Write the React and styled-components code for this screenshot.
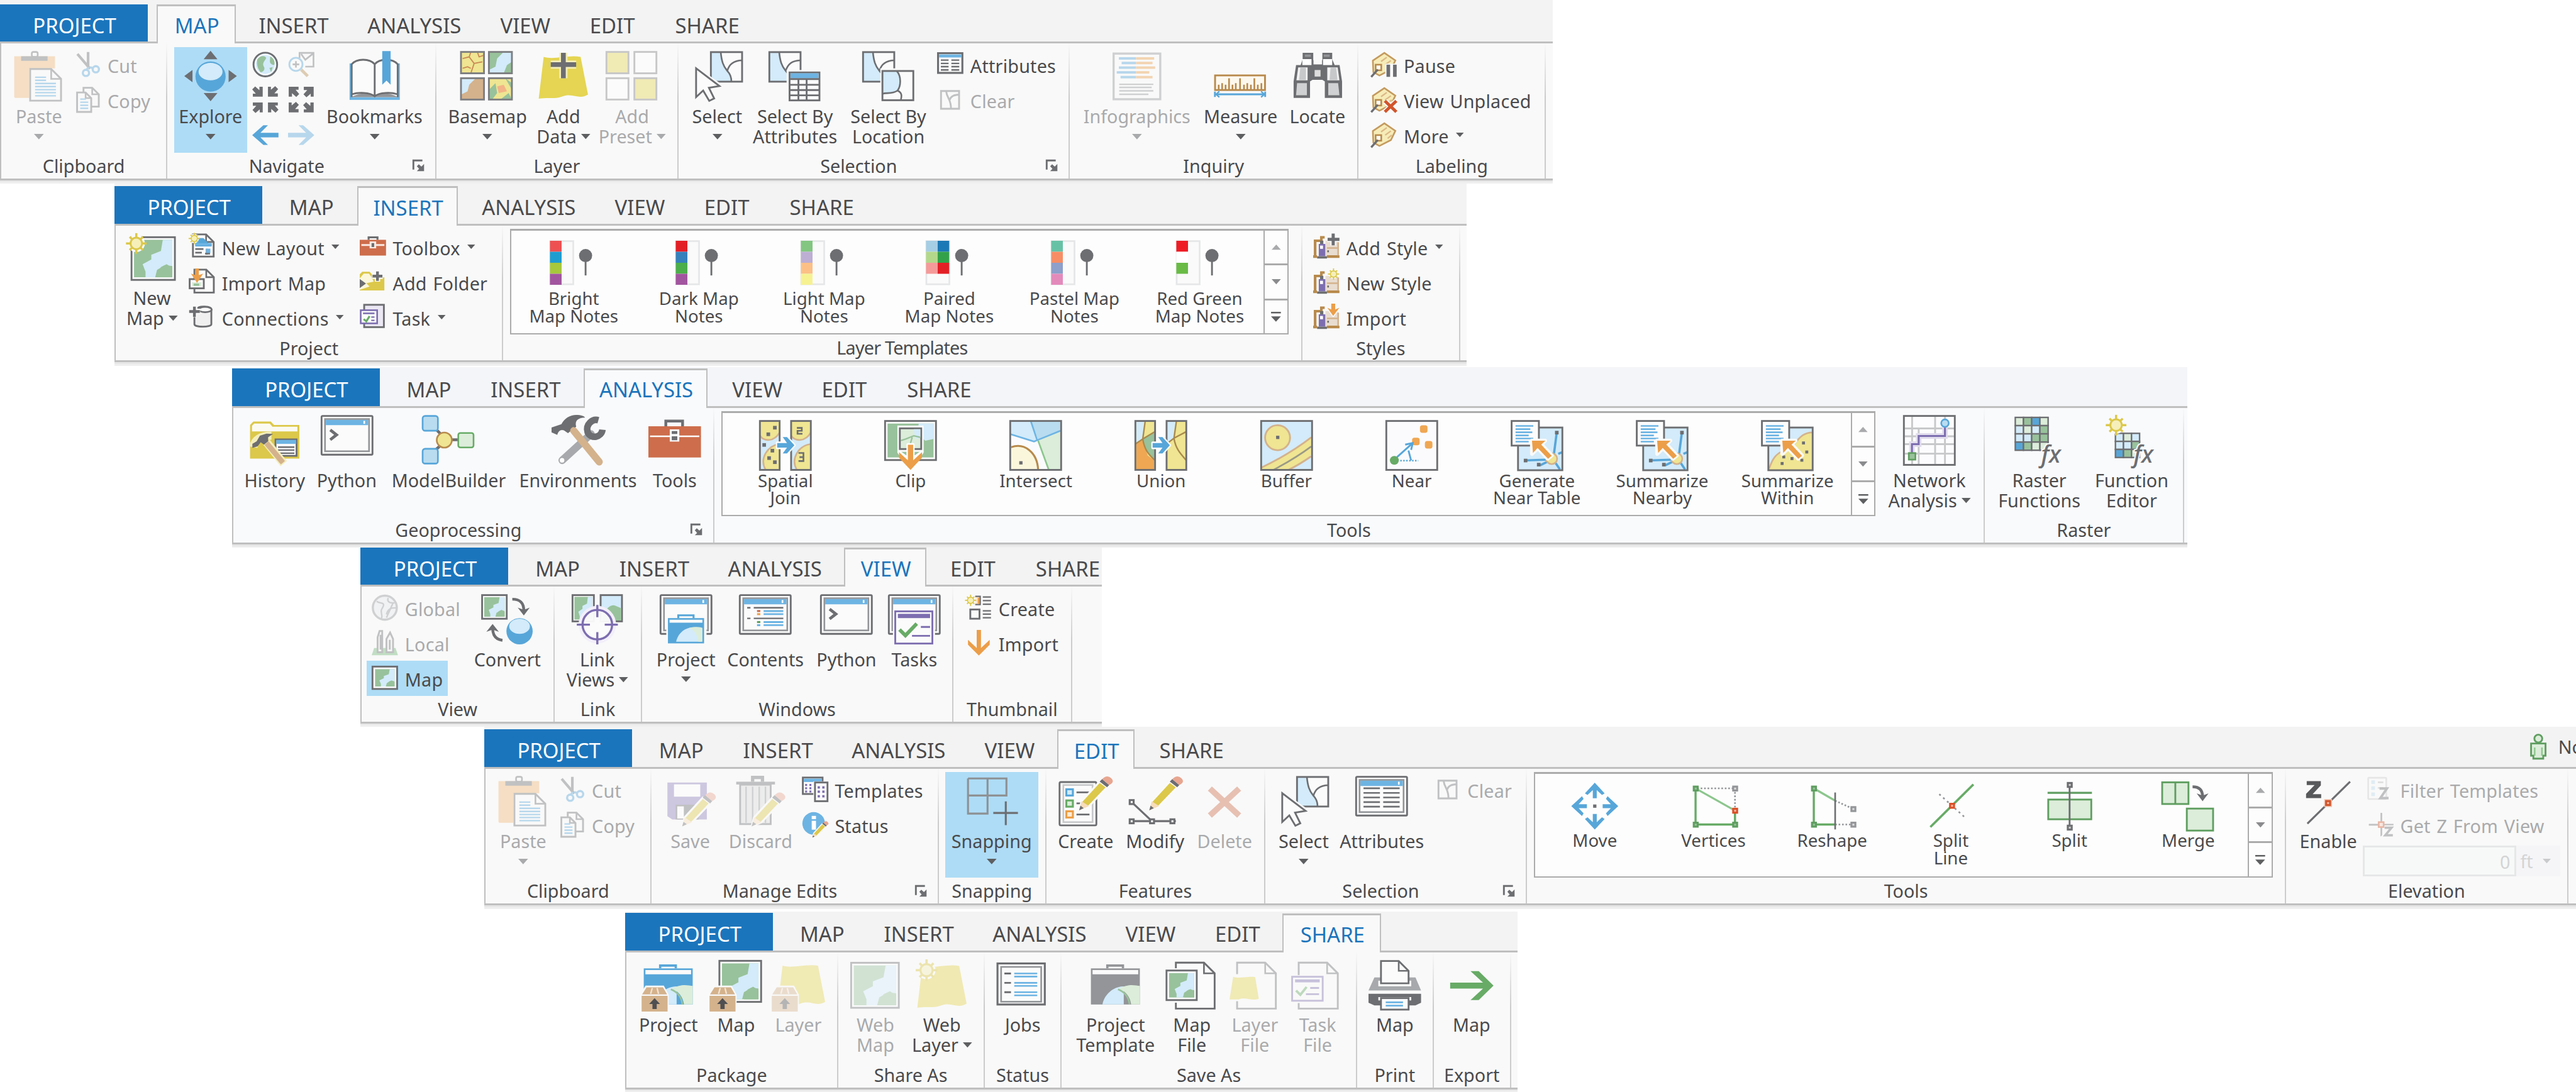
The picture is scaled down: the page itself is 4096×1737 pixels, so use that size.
import React from 'react';
import styled, { createGlobalStyle, css } from 'styled-components';

const u = (n) => `${Math.round(n * 2.6122 * 100) / 100}px`;

const C = {
  ink: '#4a4a4c', dark: '#6d6e71', mid: '#939598', light: '#c7c8ca',
  blue: '#57a6d9', sky: '#6db4e3', pale: '#d3ebfa', green: '#98c29b', leaf: '#5f9e60',
  mint: '#dcedda', yellow: '#dcc84a', sun: '#e5d552', cream: '#efe592', tan: '#d4b28c', brown: '#b88a4c',
  orange: '#ec9e48', rust: '#cd6d4b', purple: '#7d6eb0', line: '#bfbfbf', brand: '#1b75bc',
};

const Global = createGlobalStyle`
  html, body { margin: 0; padding: 0; background: #fff; overflow: hidden; }
  * { box-sizing: border-box; }
`;

const Page = styled.main`
  display: flex;
  flex-direction: column;
  align-items: flex-start;
  width: 4096px;
  height: 1737px;
  overflow: hidden;
  background: #fff;
  font-family: 'Noto Sans', 'Open Sans', sans-serif;
  font-size: ${u(11)};
  color: ${C.ink};
`;

/* ---------- ribbon frame ---------- */
const RibbonBox = styled.section`
  flex: none;
  width: ${(p) => u(p.$w)};
  margin-left: ${(p) => u(p.$x)};
  margin-top: ${(p) => u(p.$gap)};
  overflow: hidden;
`;
const TabStrip = styled.nav`
  display: flex;
  align-items: flex-end;
  height: ${(p) => u(23.7 + p.$lead)};
  border-bottom: 3px solid ${C.line};
  background: ${(p) => (p.$cool ? '#f4f5f8' : '#f3f3f3')};
`;
const Tab = styled.div`
  flex: none;
  display: flex;
  align-items: center;
  justify-content: center;
  width: ${(p) => u(p.$w)};
  height: ${u(22.9)};
  margin-left: ${(p) => u(p.$ml || 0)};
  padding-top: ${u(2.8)};
  padding-left: ${u(0.9)};
  font-size: ${u(12.6)};
  white-space: nowrap;
  color: ${C.ink};
  ${(p) => p.$brand && css`background: ${C.brand}; color: #fff;`}
  ${(p) => p.$active && css`
    height: ${u(23.9)};
    margin-bottom: -3px;
    padding-top: ${u(0.8)};
    border: 2px solid ${C.line};
    border-top-width: 3px;
    border-bottom: 0;
    background: ${p.$cool ? '#f9fafc' : '#f9f9f9'};
    color: ${C.brand};
  `}
`;
const Account = styled.div`
  display: flex;
  align-items: center;
  align-self: flex-start;
  gap: ${u(7.3)};
  margin-left: auto;
  width: ${u(28.1)};
  height: ${u(24)};
  overflow: hidden;
  white-space: nowrap;
`;
const Body = styled.div`
  display: flex;
  height: ${u(83.3)};
  border-left: 2px solid ${C.line};
  border-bottom: 3px solid ${C.line};
  background: ${(p) => (p.$cool ? '#f9fafc' : '#f9f9f9')};
`;
const Shadow = styled.div`
  height: ${u(2)};
  background: linear-gradient(#e6e6e6 50%, #efefef 50%);
`;
const GroupBox = styled.div`
  flex: none;
  display: flex;
  flex-direction: column;
  width: ${(p) => u(p.$w)};
  padding-top: ${u(2)};
  border-right: 2px solid transparent;
  border-image: linear-gradient(rgba(204, 204, 204, 0), #cccccc 40%) 1;
`;
const GroupContent = styled.div`
  display: flex;
  height: ${u(64.4)};
  padding-left: ${(p) => u(p.$pad)};
`;
const GroupFoot = styled.div`
  display: flex;
  align-items: center;
  height: ${u(16)};
`;
const GroupLabel = styled.div`
  flex: 1;
  padding-top: ${u(0.8)};
  text-align: center;
  white-space: nowrap;
  line-height: ${u(14)};
  letter-spacing: ${(p) => u(p.$track || 0)};
`;
const LauncherSlot = styled.div`
  flex: none;
  width: ${u(13.7)};
  margin-left: ${u(4.3)};
  display: flex;
`;

/* ---------- controls ---------- */
const BigBox = styled.div`
  flex: none;
  display: flex;
  flex-direction: column;
  align-items: center;
  width: ${(p) => u(p.$w)};
  height: ${u(64.4)};
  margin-left: ${(p) => u(p.$ml || 0)};
  padding-top: ${u(2.1)};
  background: ${(p) => (p.$on ? '#aedcf6' : 'transparent')};
  color: ${(p) => (p.$off ? '#a9aaac' : C.ink)};
`;
const BigText = styled.div`
  margin-top: ${u(1.9)};
  line-height: ${u(12.3)};
  text-align: center;
  white-space: nowrap;
`;
const TextLine = styled.div`
  display: flex;
  align-items: center;
  justify-content: center;
  height: ${u(12.3)};
`;
const Svg = styled.svg`
  flex: none;
  display: block;
  overflow: visible;
  width: ${(p) => u(p.$s)};
  height: ${(p) => u(p.$h || p.$s)};
  margin-left: ${(p) => u(p.$ml || 0)};
  opacity: ${(p) => (p.$off ? 0.4 : 1)};
`;
const Rows = styled.div`
  flex: none;
  display: flex;
  flex-direction: column;
  align-items: flex-start;
  width: ${(p) => (p.$w ? u(p.$w) : 'auto')};
  margin-left: ${(p) => u(p.$ml || 0)};
`;
const RowBox = styled.div`
  display: flex;
  align-items: center;
  height: ${u(21.45)};
  padding: 0 ${(p) => u(p.$px || 0)};
  background: ${(p) => (p.$on ? '#aedcf6' : 'transparent')};
  color: ${(p) => (p.$off ? '#a9aaac' : C.ink)};
  white-space: nowrap;
`;
const RowText = styled.span`
  margin-left: ${(p) => u(p.$gap)};
  padding-top: ${u(1.5)};
  letter-spacing: ${u(0.08)};
  word-spacing: ${u(0.8)};
`;
const NavGrid = styled.div`
  display: grid;
  grid-template-columns: ${u(16)} ${u(16)};
  grid-auto-rows: ${u(21.45)};
  column-gap: ${u(5.8)};
  align-items: center;
  margin-left: ${u(3)};
`;
const GalleryBox = styled.div`
  flex: none;
  display: flex;
  width: ${(p) => u(p.$w)};
  height: ${u(64.2)};
  border: 2px solid #ababab;
  border-top-width: 3px;
  background: #fdfdfd;
`;
const GalleryItem = styled.div`
  flex: none;
  display: flex;
  flex-direction: column;
  align-items: center;
  width: ${(p) => u(p.$w)};
  padding-top: ${u(3.9)};
  text-align: center;
  white-space: nowrap;
  font-size: ${u(10.6)};
  line-height: ${u(10.5)};
`;
const GalleryText = styled.div`
  margin-top: ${(p) => u(p.$up ? -0.6 : 0.1)};
`;
const Scroller = styled.div`
  display: flex;
  flex-direction: column;
  width: ${u(14.4)};
  margin-left: auto;
  border-left: 2px solid #ababab;
`;
const ScrollCell = styled.div`
  flex: 1;
  display: flex;
  align-items: center;
  justify-content: center;
  & + & { border-top: 3px solid ${(p) => (p.$strong ? '#ababab' : '#cccccc')}; }
`;
const ZField = styled.div`
  display: flex;
  align-items: center;
  margin-left: ${u(-2.7)};
  height: ${u(21.45)};
  padding-top: ${u(1)};
  color: #d3d4d5;
`;
const ZInput = styled.div`
  width: ${u(93.4)};
  height: ${u(18.8)};
  padding-right: ${u(2.4)};
  border: 3px solid #e6e7e8;
  background: #f7f9f8;
  text-align: right;
  line-height: ${u(17.4)};
`;
const ZUnit = styled.div`
  display: flex;
  align-items: center;
  gap: ${u(6)};
  width: ${u(27)};
  height: ${u(18.8)};
  padding-left: ${u(2.6)};
  background: #f5f5f8;
`;

/* ---------- drawing helpers ---------- */
const P = ({ d, c = C.dark, w = 1, f = 'none', ...r }) => <path d={d} stroke={c} strokeWidth={w} fill={f} {...r} />;
const F = ({ d, f = C.dark }) => <path d={d} fill={f} />;
const R = ({ x, y, w, h, f = 'none', s = 'none', sw = 1, rx = 0 }) => (
  <rect x={x} y={y} width={w} height={h} fill={f} stroke={s} strokeWidth={sw} rx={rx} />
);
const Halo = ({ d, w = 3, c = '#fafafa' }) => <path d={d} stroke={c} strokeWidth={w} fill={c} strokeLinejoin="round" />;

const MapArt = ({ x, y, w, h }) => (
  <svg x={x} y={y} width={w} height={h} viewBox="0 0 20 20" preserveAspectRatio="none">
    <rect width="20" height="20" fill={C.green} />
    <path d="M15 0H20V14L16 13.5L12 16L11 20H6V17L4.5 13L9 10.5V8L14 6Z" fill={C.pale} />
    <path d="M14 14.5L17 13L20 15V20H12Z" fill={C.green} />
  </svg>
);
const FramedMap = ({ x, y, w, h, c = C.dark }) => (
  <g>
    <R x={x + 0.5} y={y + 0.5} w={w - 1} h={h - 1} f="#fcfcfc" s={c} sw={1.1} />
    <MapArt x={x + 2} y={y + 2} w={w - 4} h={h - 4} />
  </g>
);
const Sun = ({ x, y, k = 1 }) => (
  <g transform={`translate(${x} ${y}) scale(${k})`}>
    <circle r="5.5" fill="#fafafa" />
    {[0, 45, 90, 135, 180, 225, 270, 315].map((a) => (
      <rect key={a} x="-0.7" y={a % 90 ? -6 : -6.6} width="1.4" height="3" fill={C.yellow} transform={`rotate(${a})`} />
    ))}
    <circle r="3.7" fill="#f6efb9" stroke={C.yellow} strokeWidth="1.2" />
  </g>
);
const Win = ({ children }) => (
  <g>
    <R x={0.5} y={1} w={31} h={23.6} f="#fbfbfb" s={C.dark} sw={1.1} rx={0.6} />
    <R x={2.6} y={2.9} w={26.8} h={19.6} f="#fbfbfb" s={C.mid} />
    <R x={3.1} y={3.4} w={25.8} h={3.2} f={C.sky} />
    <R x={26} y={4} w={1} h={1.8} f="#fff" />
    {children}
  </g>
);
const Doc = ({ x, y, w, h, fold = 6, c = C.dark, f = '#fbfbfb' }) => (
  <g>
    <path d={`M${x} ${y}H${x + w - fold}L${x + w} ${y + fold}V${y + h}H${x}Z`} fill={f} stroke={c} strokeWidth="1.1" />
    <path d={`M${x + w - fold} ${y}V${y + fold}H${x + w}`} fill="none" stroke={c} strokeWidth="1" />
  </g>
);
const Zones = ({ x, y }) => (
  <g transform={`translate(${x} ${y})`}>
    <rect x="0.5" y="0.5" width="19" height="18" fill="#fbfbfb" />
    <path d="M0.5 0.5H6.5C7 6 8.5 9 11.5 12C12.5 14 13 16 13 18.5H0.5Z" fill={C.pale} />
    <rect x="0.5" y="0.5" width="19" height="18" fill="none" stroke={C.dark} strokeWidth="1.1" />
    <path d="M6.5 0.5C7 6 8 9 10.5 12C12.5 14 13 16 13 18.5M10.5 12C11.5 8 14 5.6 19.5 5.5" fill="none" stroke={C.dark} />
  </g>
);
const Pencil = ({ x, y, k = 1 }) => (
  <g transform={`translate(${x} ${y}) scale(${k})`}>
    <path d="M0 20L1.5 14.5L12.5 2.5L17 6L6 17.5Z" fill={C.yellow} stroke="#fafafa" strokeWidth="1.2" />
    <path d="M0 20L1.5 14.5L6 17.5Z" fill="#f7dcb8" />
    <path d="M0 20L0.8 17.2L2.8 18.7Z" fill={C.dark} />
    <path d="M12.5 2.5L14 1L18.3 4.6L17 6Z" fill={C.dark} />
    <path d="M14 1Q17 -2 19.5 0.4T18.3 4.6Z" fill="#e8a690" />
  </g>
);
const Box = ({ x, y }) => (
  <g transform={`translate(${x} ${y})`}>
    <path d="M-1 16V4.5L2.4 -1H13.5L16.5 4.5V16Z" fill="#fafafa" />
    <path d="M0.3 4.3L3 0H13L15.5 4.3Z" fill={C.tan} />
    <rect x="0" y="5.2" width="15.8" height="9.6" fill={C.tan} />
    <path d="M5.5 4L6.5 0.4M10.3 4L9.4 0.4" stroke="#f3e4d2" strokeWidth="0.9" />
    <path d="M7.9 6.6L11.2 10.2H9.2V13.2H6.6V10.2H4.6Z" fill="#4f4f52" />
  </g>
);
const Dots = ({ pts, s = 1.8, f = C.dark }) => pts.map(([x, y]) => <rect key={`${x},${y}`} x={x} y={y} width={s} height={s} fill={f} />);
const Case = ({ c = C.blue }) => (
  <g>
    <R x={1} y={5.5} w={29.8} h={22} f={c} />
    <R x={2} y={6.5} w={27.8} h={2.6} f="#fafafa" />
    <P d="M11 5.5V3.8H20.5V5.5" c={c} w={1.4} />
    <F d="M8 27.5C9 22 14 16.5 21 16.5V27.5Z" f={C.pale} />
    <F d="M18 18C24 14.5 28 16 30.8 16.2V27.5H25.5C25 23 22 19 18 18Z" f={C.mint} />
    <P d="M17.5 18.3C22 20 24 23 24.5 27.5" c={C.green} w={1} />
  </g>
);
const CurveArrow = ({ d, head }) => (
  <g><P d={d} w={1.7} /><F d={head} /></g>
);
const YellowLayer = () => <F d="M4 4C10 6 19 2.6 26.5 4L31 27C25 30.5 22 25.5 15 28.2C11 29.8 6 28.5 1 29.5Z" f={C.sun} />;
const Tag = () => (
  <g>
    <P d="M1.5 5.5L8.5 0.8L15.2 5.4L12.5 11L5.5 14.6L1.8 12.5Z" c="#c49a5e" w={1} f="#f6ecb8" />
    <P d="M6.5 6L10 3.5M9 8L12.5 5.5M10.5 10L13 8" c="#dcb987" w={0.9} />
    <R x={3.2} y={8} w={3.4} h={3.4} f="#fff" s={C.brown} />
    <P d="M0.5 15.5L4.5 11" w={1.3} />
  </g>
);
const Lab = () => (
  <g>
    <P d="M1.2 13.5V4.6H5V2.5H7" c={C.brown} w={1.6} />
    <R x={7.5} y={4.5} w={7.5} h={9.5} f="#e9ddd0" />
    <R x={3.4} y={6.5} w={4} h={7.5} f={C.purple} />
    <R x={4.2} y={7.5} w={1.8} h={2} f="#fff" />
    <R x={4.2} y={4.5} w={2} h={2} f={C.dark} />
    <R x={2.4} y={14} w={6} h={1.4} f={C.dark} />
    <R x={8.6} y={10.4} w={1} h={1.2} f={C.dark} />
    <P d="M0 14.2H2.4M8.4 14.2H16" c={C.brown} w={1.6} />
    <P d="M15.2 13.5V5.5M8.4 9H15" c={C.tan} w={1} />
  </g>
);
const Palette = ({ a, b }) => (
  <g>
    <R x={1.9} y={2.5} w={14} h={26.3} f="#fafafa" s="#e5e6e7" />
    {a.map((c, i) => (c ? <R key={i} x={1.7} y={2.3 + i * 6.7} w={7.1} h={6.7} f={c} /> : null))}
    {(b || []).map((c, i) => (c ? <R key={i} x={8.8} y={2.3 + i * 6.7} w={7} h={6.7} f={c} /> : null))}
    <circle cx="23.4" cy="11.3" r="4" fill={C.dark} />
    <P d="M23.4 14V23.4" w={1.1} />
  </g>
);
const Report = ({ zone }) => (
  <g>
    <R x={4.5} y={5} w={27} h={26} f={C.pale} />
    {zone ? (
      <g>
        <F d="M4.5 31C7 24 9 21 14 19C22 17 22 8 31.5 8V31Z" f={C.cream} />
        <P d="M5 30C7 24 9 21 14 19C22 17 22 8 31.5 8" c={C.tan} />
        <Dots pts={[[25, 13.5], [27, 19], [13, 22], [18, 23], [24, 24], [12, 26], [21, 19]]} />
      </g>
    ) : (
      <g>
        <P d="M28 8.5L26 24M10 25L24 24.5M18 28L24 25M27 26L30 30.5M29 21L31.5 20" c={C.blue} w={1.4} />
        <Dots pts={[[27, 7], [8, 24], [16, 26.5]]} s={2.2} />
        <circle cx="25" cy="24" r="3.3" fill={C.cream} stroke={C.tan} />
      </g>
    )}
    <R x={4.5} y={5} w={27} h={26} s={C.dark} sw={1.1} />
    <R x={0.6} y={1} w={16.6} h={15} f="#fcfcfc" s={C.dark} sw={1.1} />
    <P d="M3 4H13.8M3 6H12M3 7.9H13.2M3 9.8H11M3 11.7H13.8M3 13.6H11" c={C.sky} w={1} />
    <Halo d="M13 13H21L18.8 15.4L25 22L22.6 24L16.6 17.6L13 21Z" w={2.4} />
    <F d="M13 13H21.2L18.6 15.4L25 22.2L22.8 24L16.4 17.4L13.6 20.5Z" f={C.orange} />
  </g>
);
const Fx = ({ x, y }) => (
  <text x={x} y={y} fontFamily="'Noto Sans', sans-serif" fontStyle="italic" fontWeight="500" fontSize="14.5" fill={C.dark}
    stroke="#f9fafc" strokeWidth="1.6" paintOrder="stroke">fx</text>
);
const Cells = ({ x, y, s, rows }) => rows.map((r, j) => r.split('').map((k, i) => (
  <rect key={`${i}${j}`} x={x + i * s} y={y + j * s} width={s} height={s} stroke={C.dark} strokeWidth="0.9"
    fill={{ m: C.mint, g: C.green, b: C.blue, p: C.pale }[k]} />
)));
const Node = ({ x, y, c = C.leaf, f = '#98c29b' }) => <rect x={x - 1.1} y={y - 1.1} width="2.4" height="2.4" fill={f} stroke={c} strokeWidth="1.2" />;
const Arrow4 = 'M16 1.5L22 8L20.4 9L17.2 6V11H14.8V6L11.6 9L10 8Z';
const Corner = ({ x, y, a }) => (
  <path transform={`translate(${x} ${y}) rotate(${a})`} d="M-3 -3H3V-1.2L1.2 -1.2L3.4 1.4L1.6 3.2L-1 0.9V3H-3Z" fill={C.dark} />
);

/* ---------- icon set ---------- */
const ICONS = {
  paste: (
    <g>
      <F d="M1 3.6H25.8V11H10V29H2Q1 29 1 28Z" f="#f0b776" />
      <F d="M5.2 3.6H21.3V6.4H5.2Z" f={C.dark} />
      <R x={11.7} y={1} w={3.6} h={3} s={C.dark} rx={1} />
      <Doc x={10.7} y={11.4} w={18.8} h={19.3} />
      <P d="M13.7 16.4H20.4M13.7 18.3H20.4M13.7 20.2H26.4M13.7 22.1H26.4M13.7 24H26.4M13.7 25.8H26.4M13.7 27.7H26.4" c={C.blue} w={0.9} />
    </g>
  ),
  cut: (
    <g>
      <P d="M0.8 1.5L8.5 10.5M7.3 0.3V9.5" w={1.6} />
      <circle cx="6" cy="13" r="1.9" fill="none" stroke={C.blue} strokeWidth="1.3" />
      <circle cx="12" cy="10.8" r="1.9" fill="none" stroke={C.blue} strokeWidth="1.3" />
      <P d="M7.5 9.5L6.5 11M8.5 9.5L10.4 10.2" c={C.blue} w={1.3} />
    </g>
  ),
  copy: (
    <g>
      <Doc x={4.5} y={0.6} w={9.3} h={11.5} fold={4} />
      <Doc x={0.6} y={3.5} w={8.6} h={11.8} fold={3.4} />
      <P d="M2.5 7.5H6M2.5 9.4H7.4M2.5 11.3H7.4M2.5 13.1H7.4" c={C.blue} w={0.9} />
    </g>
  ),
  explore: (
    <g>
      <F d="M16 0.3L20.2 5.5H11.8ZM16 31L20.2 26H11.8ZM0 15.7L5 12V19.4ZM32 15.7L27 12V19.4Z" />
      <circle cx="16" cy="16" r="9.2" fill={C.blue} />
      <ellipse cx="16" cy="13" rx="7.3" ry="5.3" fill={C.pale} />
    </g>
  ),
  globe: (
    <g>
      <circle cx="8" cy="7.9" r="7.2" fill={C.pale} stroke={C.dark} strokeWidth="1.1" />
      <circle cx="8" cy="7.9" r="6.1" fill={C.pale} stroke="#fff" strokeWidth="0.7" />
      <F d="M3 5C5 2 8 2.5 8.5 4C7.5 6 6 7 7 9C8.5 11 6 13 5 12.5C4 11 2.5 9 3 5ZM11 3C13 4 14 6 13.5 8C12 8.5 10.5 7 10.8 5.5ZM10.5 10L12.5 9.5L11.5 12.5Z" f={C.green} />
    </g>
  ),
  zoomSel: (
    <g>
      <P d="M7 4V0.8H15.5V9.2H10.5M8 1.5L10.5 5L15.3 1.2" />
      <circle cx="4.8" cy="7.8" r="4" fill="#fafafa" stroke={C.blue} strokeWidth="1.1" />
      <P d="M2.8 7.8H6.8M4.8 5.8V9.8" />
      <P d="M8 11L12 15" c={C.brown} w={1.8} />
    </g>
  ),
  shrink: <g><Corner x={3.4} y={3} a={180} /><Corner x={12.6} y={3} a={270} /><Corner x={3.4} y={12.6} a={90} /><Corner x={12.6} y={12.6} a={0} /></g>,
  grow: <g><Corner x={3.4} y={3} a={0} /><Corner x={12.6} y={3} a={90} /><Corner x={3.4} y={12.6} a={270} /><Corner x={12.6} y={12.6} a={180} /></g>,
  back: <F d="M0 8L6.8 2H9.6L5 6.6H16V9.4H5L9.6 14H6.8Z" f={C.blue} />,
  fwd: <F d="M16 8L9.2 2H6.4L11 6.6H0V9.4H11L6.4 14H9.2Z" f={C.blue} />,
  book: (
    <g>
      <R x={0.7} y={8} w={30.6} h={22.2} f={C.sky} />
      <F d="M2 28.5V8.5C5 4.8 13 4.8 16 8.5C19 4.8 27 4.8 30 8.5V28.5Z" f="#fbfbfb" />
      <F d="M2 28.5C6 26 13 25.5 16 28C19 25.5 26 26 30 28.5Z" f={C.mid} />
      <P d="M2 28.5V8.5C5 4.8 13 4.8 16 8.5C19 4.8 27 4.8 30 8.5V28.5M16 8.5V28M2 26.8C6 25.5 13 25.5 16 28C19 25.5 26 25.5 30 26.8" w={1.1} />
      <F d="M20.6 0.5H25.7V21L23.2 18.5L20.6 21Z" f={C.blue} />
    </g>
  ),
  basemap: (
    <g>
      <R x={0} y={1} w={14} h={13} f={C.cream} /><P d="M1 5L5 4L6 1M5 4L8 8L13 7M8 8L6 14M10 1L11 4L14 3M1 11L4 10L6 11" c="#c98a55" w={0.7} />
      <R x={17} y={1} w={14} h={13} f={C.pale} /><F d="M17 1H26L22 5L21 10L17 12ZM31 7L28 9L26 14H31Z" f={C.green} />
      <R x={0} y={17} w={14} h={13} f={C.tan} /><F d="M0 17H9L5 21L4 25L0 27Z" f={C.pale} />
      <R x={17} y={17} w={14} h={13} f={C.cream} /><F d="M17 24L21 20L22 26L19 30H17ZM27 17L31 20V24ZM24 30L29 26L31 30Z" f={C.green} /><F d="M22 22L26 21L28 25L23 26Z" f="#f3b487" />
      {[[0, 1], [17, 1], [0, 17], [17, 17]].map(([x, y]) => <R key={`${x}-${y}`} x={x} y={y} w={14} h={13} s="#7d7e81" sw={1.1} />)}
    </g>
  ),
  addData: (
    <g>
      <YellowLayer />
      <P d="M16 1.5V17M8.3 8.7H23.8" c="#f3eebb" w={5} />
      <P d="M16 1.5V17M8.3 8.7H23.8" w={2.9} />
    </g>
  ),
  preset: (
    <g>
      {[[0, 1, 1], [17, 1, 0], [0, 17, 0], [17, 17, 1]].map(([x, y, on]) => (
        <R key={`${x}-${y}`} x={x + 0.5} y={y} w={13.4} h={13} f={on ? '#e5d552' : '#fff'} s="#7d7e81" sw={1.1} />
      ))}
    </g>
  ),
  select: (
    <g>
      <Zones x={11.5} y={0.6} />
      <Halo d="M3 11V28.5L7.3 24.5L11 30.8L14 29.3L10.8 22.8L17.5 21.5Z" w={2.4} c="#f9f9f9" />
      <P d="M3 11V28.5L7.3 24.5L11 30.8L14 29.3L10.8 22.8L17.2 21.8Z" f="#fbfbfb" w={1.1} />
    </g>
  ),
  selectAttr: (
    <g>
      <Zones x={0} y={0.6} />
      <R x={11} y={12} w={22} h={20} f="#f9f9f9" />
      <R x={12.8} y={13.5} w={18.2} h={17} f="#fbfbfb" s={C.dark} sw={1.1} />
      <R x={13.4} y={14} w={17} h={3} f={C.sky} />
      <P d="M12.8 17.5H31M12.8 21H31M12.8 24.2H31M12.8 27.4H31M18.2 17.5V30.5M23.2 17.5V30.5" w={1.1} />
    </g>
  ),
  selectLoc: (
    <g>
      <Zones x={0} y={0.6} />
      <R x={11} y={11} w={22} h={21} f="#f9f9f9" />
      <R x={12.3} y={12.6} w={18.8} h={17.8} f="#fbfbfb" />
      <F d="M12.3 12.6H21C24 16 23.5 22 21.5 24.5C18 27 15 26 12.3 26.5Z" f={C.pale} />
      <P d="M21 12.6C24 16 23.5 22 21.5 24.5C18 27 15 25.5 12.3 26.5M21.5 24.5C24.5 26 24 28 23.5 30.4" />
      <R x={12.3} y={12.6} w={18.8} h={17.8} s={C.dark} sw={1.1} />
    </g>
  ),
  tableSm: (
    <g>
      <R x={0.6} y={1} w={14.8} h={12} f="#fbfbfb" s={C.dark} sw={1.2} />
      <R x={1.2} y={1.8} w={13.6} h={1.8} f={C.sky} />
      <P d="M2.3 5.2H7M8.7 5.2H13.5M2.3 7.2H7M8.7 7.2H13.5M2.3 9.2H7M8.7 9.2H13.5M2.3 11.2H7M8.7 11.2H13.5" w={0.9} />
    </g>
  ),
  clear: <P d="M2.4 2.6H13.4V13.4H2.4ZM5.5 2.6C6 7 8.5 7.5 8.5 13.4M7.5 8.2C8.5 5.5 10.5 5 13.4 4.8" w={1.1} />,
  info: (
    <g>
      <R x={1.8} y={2} w={28.4} h={27.8} f="#fbfbfb" s={C.mid} sw={1.3} />
      {[[5, 11, 4.9], [6.7, 10, 7.7], [5, 11.6, 10.5], [3.7, 8, 13.4], [6, 10, 16.3]].map(([a, r, y]) => (
        <g key={y}><R x={a} y={y - 0.7} w={15.5 - a} h={1.5} f={C.blue} /><R x={15.5} y={y - 0.7} w={r} h={1.5} f={C.orange} /></g>
      ))}
      <P d="M5.2 20.7H26M5.2 22.6H25M5.2 24.7H26M5.2 26.8H23" c={C.mid} w={0.9} />
    </g>
  ),
  measure: (
    <g>
      <R x={0.4} y={15.3} w={30.4} h={8.9} f="#fdf8ee" s={C.brown} sw={1.1} />
      <P d="M2.6 24V21M4.7 24V20M6.8 24V21M8.9 24V17M11 24V21M13 24V20M15.6 24V17M18 24V21M20 24V20M22.2 24V21M24.3 24V17M26.4 24V21M28.6 24V20" c={C.brown} w={1} />
      <P d="M0.3 25.2V28.4M30.9 25.2V28.4M1 26.8H30.5" c={C.blue} w={1.1} />
      <P d="M3 25L1 26.8L3 28.6M28.4 25L30.4 26.8L28.4 28.6" c={C.blue} w={0.9} />
    </g>
  ),
  locate: (
    <g>
      <F d="M7 1.5H13.5V6H19V1.5H25V5.5L26.5 9H29.5L31 19V29H20.5V19L19 18H13L11.5 19V29H1.5V19L3 9H5.8L7 5.5Z" />
      <F d="M13.6 1.5H18.8V8.6H13.6Z" f="#f9f9f9" />
      <F d="M8.3 2.6H12V4H8.3ZM19.8 2.6H23.5V4H19.8Z" f={C.mid} />
      <F d="M6.8 5.4H12.4V9H6.8ZM19.4 5.4H25V9H19.4Z" f="#fff" />
      <F d="M4.3 10.4H10V18.3H3.2ZM22 10.4H28.3L29.4 18.3H22Z" f="#f2f2f2" />
      <F d="M5.6 10.4H9V18.3H4.8Z" f={C.light} /><F d="M24 10.4H27.4L28.2 18.3H23.4Z" f={C.light} />
      <F d="M3.6 20H9.6V27.4H3ZM22.6 20H28.6L29.4 27.4H22.6Z" f="#d0d1d2" />
      <R x={14.3} y={12} w={3.6} h={4} f="#ddd" />
    </g>
  ),
  tagPause: <g><Tag /><R x={9} y={7.4} w={7.4} h={8.4} f="#f9f9f9" /><R x={9.8} y={8} w={2.2} h={7.4} f={C.dark} /><R x={13.8} y={8} w={2.2} h={7.4} f={C.dark} /></g>,
  tagX: <g><Tag /><P d="M9 8.8L15.8 15.3M15.8 8.8L9 15.3" c="#fafafa" w={3.4} /><P d="M8.8 8.6L15.8 15.3M15.8 8.6L8.8 15.3" c="#d2552b" w={1.9} /></g>,
  tag: <Tag />,
  launcher: <g><P d="M0.5 6V0.5H6" w={1.1} /><F d="M7 2.6V7H2.6L4 5.6L2.6 4L3.8 2.8L5.4 4.2Z" /></g>,

  newMap: <g><FramedMap x={3} y={2.3} w={27.4} h={27} /><Sun x={6.4} y={6.6} k={0.95} /></g>,
  newLayout: (
    <g>
      <Doc x={2.6} y={0.7} w={12.6} h={13.5} fold={4.6} />
      <F d="M4 3H9L12 6H14V8H4Z" f={C.blue} /><R x={4} y={6} w={10} h={1.6} f={C.sky} />
      <P d="M4 9.6H9M4 11.8H8M11 9.5V13M10 12.4H13" w={1} /><R x={10.6} y={9.4} w={2.6} h={2.6} f={C.sky} />
      <Sun x={3.4} y={3.2} k={0.52} />
    </g>
  ),
  importMap: (
    <g>
      <Doc x={3.5} y={0.7} w={11.8} h={14} fold={4.6} />
      <R x={0.6} y={6.5} w={8.6} h={5.6} f="#fbfbfb" s={C.dark} sw={1.1} /><R x={2} y={8.4} w={5.8} h={2.4} f={C.mint} /><R x={3} y={9.2} w={3.4} h={1.4} f={C.green} />
      <F d="M4 0H6.2V4L8.8 3.2L5.1 8.8L1.4 3.2L4 4Z" f={C.orange} />
    </g>
  ),
  connections: (
    <g>
      <P d="M3.5 8V12.5C3.5 14.5 13.8 14.5 13.8 12.5V3.5C13.8 1.5 6 1.2 5.4 3" f="#f0f0f0" w={1.1} />
      <ellipse cx="10" cy="3.6" rx="4" ry="1.6" fill="#fbfbfb" stroke={C.dark} strokeWidth="1" />
      <P d="M0 4.8H7M3.5 1.4V8.2" c="#f9f9f9" w={3.4} /><P d="M0.3 4.8H6.8M3.5 1.8V8" w={1.7} />
    </g>
  ),
  toolboxSm: (
    <g>
      <P d="M5.4 4V2.5H10.8V4" w={1.2} /><R x={0} y={4} w={16} h={9.6} f={C.rust} />
      <P d="M1 7.2H15" c="#fbe9e2" w={1.1} /><R x={6} y={5} w={4} h={4.2} f="#fbe9e2" /><R x={7.2} y={6} w={1.6} h={2.4} f={C.dark} />
    </g>
  ),
  addFolder: (
    <g>
      <F d="M0 3.5L1.5 2H6L7.5 3.6V5.5H15V13.4H0Z" f={C.yellow} />
      <F d="M1.4 4.4L2.4 3.2H5.6L7 5L8.5 8L4 9L6 11L0 13V6Z" f="#fbf7dc" />
      <F d="M0 6.4L3.8 9.2L0 12Z" />
      <P d="M10.8 1.6V8M7.6 4.8H14" c="#fafafa" w={3.2} /><P d="M10.8 1.8V7.6M7.8 4.7H13.8" w={1.7} />
    </g>
  ),
  task: (
    <g>
      <R x={2.7} y={0.7} w={12} h={13.6} f="#ebe7f3" s={C.dark} sw={1.1} />
      <R x={0.6} y={4} w={10} h={8} f="#fbfbfb" s={C.purple} sw={1} />
      <R x={2} y={5.4} w={7} h={1} f={C.purple} /><P d="M2.4 9.4L4 10.8L6 7.6" c="#67ab66" w={1.2} /><P d="M7 8.2H9M7 10.2H9" c={C.purple} w={0.9} />
    </g>
  ),
  addStyle: <g><Lab /><P d="M12.2 0V7.5M8.6 3.7H16" c="#fafafa" w={3.4} /><P d="M12.2 0.2V7.4M8.8 3.7H16" w={1.9} /></g>,
  newStyle: <g><Lab /><Sun x={12.4} y={3.4} k={0.52} /></g>,
  importStyle: <g><Lab /><Halo d="M11 0H13.4V3.5L16 2.5L12.2 7.5L8.6 2.5L11 3.5Z" w={1.2} /><F d="M11 0H13.4V3.5L16 2.5L12.2 7.5L8.6 2.5L11 3.5Z" f={C.orange} /></g>,
  pBright: <Palette a={['#ee5052', '#1f9dd1', '#a6c83b', '#a2559f']} />,
  pDark: <Palette a={['#e31f26', '#3680bc', '#4cae4b', '#a2559f']} />,
  pLight: <Palette a={['#82c681', '#bdaed4', '#fcc086', '#f6f292']} />,
  pPaired: <Palette a={['#a5cde4', '#b3d88b', '#f59a99', null]} b={['#1d79b5', '#33a14a', '#e31f26', null]} />,
  pPastel: <Palette a={['#67c2a5', '#f68d65', '#8d9fcb', '#e38abb']} />,
  pRedGreen: <Palette a={['#ee1c25', '#ffffff', '#69bb45', null]} />,

  history: (
    <g>
      <F d="M1 6.5L3 4.4H13.6L15.6 6.5H31V27H1Z" f={C.yellow} />
      <F d="M2.2 7L3.5 5.6H13L14.6 7.6H29.8V10.4H2.2Z" f="#fbfaf2" />
      <R x={16.5} y={15.3} w={12.8} h={10} f="#fbfbfb" s={C.dark} sw={1.1} /><R x={17} y={15.6} w={12} h={2.4} f={C.sky} />
      <P d="M18 20H28M18 21.8H28M18 23.7H28" w={0.9} />
      <P d="M11 17L21.5 30" c="#f3eebb" w={5} />
      <P d="M3 20C4 15 8 13 14 13" c="#f3eebb" w={5} />
      <F d="M2.4 20.5V18L5 16.5L7 13L11 11.8L15 12L12 14V16.5L9.5 18.5L7.5 17L5.6 19.5Z" />
      <P d="M11 17.5L21 29.5" c={C.tan} w={3.2} />
    </g>
  ),
  python: <Win><P d="M5.8 9.5L9.6 12.5L5.8 15.5" w={1.8} /></Win>,
  model: (
    <g>
      <P d="M7 8L13 14M7 22.5L12 18M16 15.5H23" w={1.8} />
      <R x={0} y={1} w={9.3} h={9} rx={1.5} f="#b9dcf0" s={C.blue} />
      <R x={0} y={21} w={9.3} h={9} rx={1.5} f="#b9dcf0" s={C.blue} />
      <circle cx="13.2" cy="15.7" r="4.6" fill={C.cream} stroke={C.brown} />
      <R x={21.7} y={11.4} w={9.3} h={8.8} rx={1.2} f={C.mint} s="#67ab66" />
    </g>
  ),
  env: (
    <g>
      <P d="M24 12L6.5 28" c="#a7a9ac" w={4.6} strokeLinecap="round" />
      <circle cx="6.4" cy="28" r="1.4" fill="#fff" />
      <P d="M28.5 3.6C25 2.6 20.5 6 22 11C24 15.5 30.5 14 31 9.4" w={4} />
      <F d="M0 11V8L6 6C8 2 12 0 16 0.4C19 0.6 20 1.4 20.4 2C16 2 14 4 15 7.6L10 11.5L7.5 9.8C5.5 9 4 10.5 3.5 12.5Z" />
      <P d="M13.5 10L29 29" c={C.tan} w={4.4} strokeLinecap="round" />
    </g>
  ),
  toolbox: (
    <g>
      <P d="M10.6 8V4.1H20.8V8" w={1.7} />
      <R x={0} y={7.3} w={32} h={19} f={C.rust} />
      <P d="M1 13.4H31" c="#fff" w={0.9} />
      <R x={13} y={9.2} w={5.8} h={7.4} f="#fff" /><R x={14.2} y={10.2} w={3.4} h={1.8} f={C.dark} /><R x={14.2} y={13.4} w={3.4} h={2.4} f={C.dark} />
    </g>
  ),
  spatialJoin: (
    <g>
      {[0, 19].map((x) => (
        <g key={x} transform={`translate(${x} 0)`}>
          <R x={0.5} y={1} w={12} h={29.8} f={C.pale} />
          <F d="M0.5 1H12.5V8C9 14 3 13.5 0.5 10Z" f={C.cream} /><P d="M12.5 8C9 14 3 13.5 0.5 10" c={C.tan} />
          <F d="M12.5 15C5 16 0 24 4 30.8H12.5Z" f={C.cream} /><P d="M12.5 15C5 16 0 24 4 30.8" c={C.tan} />
          <R x={0.5} y={1} w={12} h={29.8} s={C.dark} sw={1.1} />
        </g>
      ))}
      <Dots pts={[[8.5, 4], [4.5, 8], [2, 14.5], [7, 18], [5, 22.5], [8.5, 25]]} s={2.2} />
      <P d="M23 5.2H26V7H23.4V8.8H26.4M24 20.5H27V23H24.6M27 23V25.4H24" w={1} />
      <Halo d="M11 14.3H16L14 10.8H17L21.5 15.8L17 20.8H14L16 17.4H11Z" w={1.6} c="#fdfdfd" />
      <F d="M11 14.5H17L14.4 10.8H17L21.5 15.8L17 20.8H14.4L17 17.2H11Z" f={C.blue} />
    </g>
  ),
  clip: (
    <g>
      <R x={0.5} y={1} w={31} h={23.8} f="#fbfbfb" s={C.dark} sw={1.1} />
      <R x={2} y={2.6} w={28} h={20.6} f={C.green} /><F d="M21 2.6H30V12L25 13L20 9Z" f={C.pale} />
      <R x={8} y={3.8} w={16} h={16} f="#fbfbfb" /><R x={9.5} y={5.5} w={13} h={12.6} f={C.mint} s={C.dark} sw={1.1} />
      <F d="M18 6H22V11L19 12Z" f={C.pale} /><P d="M10 13L13 12L18 10L22 11M17 11L15 18" c={C.green} w={0.9} />
      <Halo d="M14.5 15.5H17.5V24L23 20L16 30L9 20L14.5 24Z" w={2} c="#fdfdfd" />
      <F d="M14.4 15.5H17.6V25L23 20V23.4L16 30.8L9 23.4V20L14.4 25Z" f={C.orange} />
    </g>
  ),
  intersect: (
    <g>
      <R x={0.5} y={1} w={31} h={29.8} f="#fbfbfd" />
      <F d="M0.5 1H13L17 13L15 13.5L0.5 9Z" f={C.pale} /><F d="M13 1H31V7L17.5 12.5Z" f="#b9dcf0" />
      <F d="M17.5 13L31 7V30.8H24Z" f={C.mint} />
      <F d="M1 17C9 14 17 20 17.5 30.8H1Z" f="#faf6dc" />
      <P d="M0.5 9L15 13.5L17.5 12.5L31 7M13 1L17 13" c={C.sky} /><P d="M17.5 13L24 30.8" c="#8cc68d" />
      <P d="M1 17C9 14 17 20 17.5 30.8" c={C.brown} w={1.2} />
      <R x={6} y={25.5} w={2} h={2} f={C.dark} />
      <R x={0.5} y={1} w={31} h={29.8} s={C.dark} sw={1.1} />
    </g>
  ),
  union: (
    <g>
      <R x={0.5} y={1} w={12} h={29.8} f={C.cream} /><F d="M1 1H6.5L5 12L1 15Z" f={C.pale} /><F d="M1 15L5 12L8 22L12 25V30.8H1Z" f="#efa753" />
      <F d="M5 12L12.5 8V25C8 21 6 17 5 12Z" f={C.green} /><P d="M6.5 1L5 12C6 18 8 21 12.5 25M0.5 15L5 12L12.5 7.5" c="#a98a4c" w={0.9} />
      <R x={0.5} y={1} w={12} h={29.8} s={C.dark} sw={1.1} />
      <R x={19.5} y={1} w={12} h={29.8} f={C.cream} /><F d="M20 1H25L24 11L20 14.5Z" f={C.pale} />
      <P d="M25.5 1L24 11.5C25 18 28 21 31.5 25M19.5 15L24 11.5L31.5 7.5" c="#a98a4c" w={0.9} /><R x={19.5} y={1} w={12} h={29.8} s={C.dark} sw={1.1} />
      <Halo d="M11 14.3H16L14 10.8H17L21.5 15.8L17 20.8H14L16 17.4H11Z" w={1.6} c="#fdfdfd" />
      <F d="M11 14.5H17L14.4 10.8H17L21.5 15.8L17 20.8H14.4L17 17.2H11Z" f={C.blue} />
    </g>
  ),
  buffer: (
    <g>
      <R x={0.5} y={1} w={31} h={29.8} f={C.pale} />
      <circle cx="10.5" cy="11.2" r="7.6" fill={C.cream} stroke={C.tan} strokeWidth="1.1" /><R x={9.6} y={10} w={2} h={2} f={C.dark} />
      <F d="M0.5 29.5C12 24 22 18 31 11V21.5C26 26 22 28.5 17 30.8H0.5Z" f={C.cream} />
      <P d="M0.5 29.5C12 24 22 18 31 11M17 30.8C22 28.5 26 26 31 22.5" c={C.tan} w={1.1} /><P d="M8 30.8C17 26 25 21 31 16.5" c="#9a9a86" />
      <R x={0.5} y={1} w={31} h={29.8} s={C.dark} sw={1.1} />
    </g>
  ),
  near: (
    <g>
      <R x={0.5} y={1} w={31} h={29.8} f="#fbfbfd" s={C.dark} sw={1.1} />
      <R x={21} y={3.6} w={4.6} h={4.6} rx={1.4} f="#efa753" /><R x={16.2} y={11.2} w={4.6} h={4.6} rx={1.4} f="#efa753" /><R x={24} y={13.2} w={4.6} h={4.6} rx={1.4} f="#efa753" />
      <circle cx="5.4" cy="25" r="2.7" fill="#67ab66" />
      <P d="M7 23L16 15M12 15.4L16.6 14.4L15.6 18.6M14 19L15.6 25" c={C.blue} w={1.1} /><P d="M9 25.2H20" c={C.blue} strokeDasharray="0.9 0.9" />
    </g>
  ),
  report: <Report />,
  reportZone: <Report zone />,
  network: (
    <g>
      <R x={0.5} y={1} w={31} h={29.8} f="#fcfcfe" />
      <P d="M5.5 1V31M9.5 9V31M19.5 1V31M25.5 1V31M1 8.6H31M1 13.4H31M1 18.2H31M1 24H31" c={C.light} w={1.1} />
      <P d="M5.4 25V18.2H9.5V13.2H25.5V7" c="#e2dded" w={3.4} /><P d="M5.4 25V18.2H9.5V13.2H25.5V7" c={C.purple} w={1.2} />
      <circle cx="25.5" cy="5.4" r="2.3" fill="#b9dcf0" stroke={C.blue} /><R x={3.5} y={23.6} w={4} h={4} f={C.green} s={C.leaf} />
      <R x={0.5} y={1} w={31} h={29.8} s={C.dark} sw={1.1} />
    </g>
  ),
  rasterFx: <g><Cells x={1.3} y={1.9} s={5} rows={['mgbm', 'pmpg', 'ppgg', 'bgmm']} /><Fx x={17} y={29.5} /></g>,
  funcFx: <g><Cells x={6} y={11.6} s={4.9} rows={['pmp', 'ppg', 'bgm']} /><Sun x={6.4} y={6.6} k={0.95} /><Fx x={17} y={29.5} /></g>,

  global: (
    <g>
      <circle cx="8" cy="7.9" r="7.3" fill="#e4e9ef" stroke={C.mid} strokeWidth="1.3" />
      <P d="M3 4C6 6 9 4 6 9C5 11 7 12 6 14.5M10 2C9 5 12 5 14 5M9 12C10 8 12 8 15 8M13 5L9 14" c={C.mid} w={0.9} />
    </g>
  ),
  local: (
    <g>
      <F d="M1.5 11H14.5L16 15.4H0Z" f="#6fb873" />
      <P d="M3.6 13.6V4.5L4.8 0.6H6.4V13.6ZM9 13.6V5.5L11.2 1.6L13 5.5V13.6ZM5.4 3V12M11 6V12" f="#f4f4f4" w={1.1} />
    </g>
  ),
  mapSm: <FramedMap x={0} y={0.4} w={16} h={14.6} />,
  convert: (
    <g>
      <R x={0.6} y={1} w={15} h={14.4} s={C.dark} sw={1.1} f="#fbfbfb" /><MapArt x={1.8} y={2.2} w={12.6} h={12} />
      <CurveArrow d="M19 3.5C24 3.5 26 6 26 10.5" head="M22.3 8.6L26 13.4L29.6 8.6L26 10Z" />
      <CurveArrow d="M13 28.5C8.5 28 7 25 7 21" head="M3.2 23.4L7 18.6L10.8 23.4L7 22Z" />
      <circle cx="23.4" cy="23" r="8" fill={C.blue} /><ellipse cx="23.4" cy="20" rx="6.3" ry="4.6" fill={C.pale} />
    </g>
  ),
  linkViews: (
    <g>
      <R x={0.9} y={1} w={13} h={16} s={C.dark} sw={1.1} f="#fbfbfb" /><MapArt x={2} y={2} w={11} h={14} />
      <R x={18} y={1} w={13} h={16} f={C.pale} s={C.dark} sw={1.1} /><F d="M19 16.5C20 10 24 6 27 7.5L30.6 9V16.5Z" f={C.green} />
      <circle cx="16" cy="19" r="9.4" fill="#ffffffcc" stroke="#f3effa" strokeWidth="4" />
      <circle cx="16" cy="19" r="9" fill="#fafafacc" stroke={C.purple} strokeWidth="1.3" />
      <P d="M16 7V14.5M16 23.5V31M3.5 19H11.5M20.5 19H28.5" c={C.purple} w={1.3} />
    </g>
  ),
  winProject: (
    <Win>
      <R x={4} y={13} w={24.5} h={18} f="#fafafa" />
      <P d="M11.3 15V13.3H20.6V15" c={C.blue} w={1.2} />
      <R x={5} y={15} w={22} h={15.4} f={C.blue} /><R x={6} y={16} w={20} h={1.8} f="#fafafa" />
      <F d="M10 29.4C11 24 16 20.5 20 20.8L25.5 29.4Z" f={C.pale} /><F d="M18 21C22 20 25 20.5 26 21V29.4H23.5C23 25 21 22.5 18 21Z" f={C.mint} />
    </Win>
  ),
  contents: (
    <Win>
      <P d="M5 8.7H7M9 8.7H27M5 15.2H7M9 15.2H27" w={0.9} />
      <P d="M15 10.7H27M15 12.6H27M15 17.4H27M15 19.3H27" c={C.sky} w={1.1} />
      <P d="M11 10.7H13" c={C.rust} w={1.2} /><P d="M11 12.6H13" c={C.orange} w={1.2} /><P d="M11 17.4H13" c={C.leaf} w={1.2} /><P d="M11 19.3H13" c={C.sky} w={1.2} />
    </Win>
  ),
  tasks: (
    <Win>
      <R x={3} y={9.8} w={25.6} h={21.6} f="#fafafa" />
      <R x={4.4} y={10.9} w={22.6} h={19.6} f="#fbfbfb" s={C.purple} sw={1.1} /><R x={6} y={12.4} w={19.6} h={2.6} f={C.purple} />
      <P d="M7 22L10.6 25.6L17.5 18.4" c="#67ab66" w={2.2} /><P d="M20 20.4H25.6M14.6 25.8H25.6" c={C.purple} w={1.1} />
    </Win>
  ),
  create: (
    <g>
      <R x={6} y={0.8} w={3} h={5} f="#fbe9d3" /><P d="M6 1H9V6H6" c={C.dark} w={0.9} /><P d="M8 1.8V5.6" c={C.orange} /><P d="M10.6 1.4H15.6M10.6 3.6H15.6M10.6 5.8H15.6" w={0.9} />
      <R x={3} y={9} w={5.6} h={5.6} f="#fbfbfb" s={C.dark} sw={1.1} /><P d="M10.6 9.8H15.6M10.6 11.8H15.6M10.6 14H15.6" w={0.9} />
      <Sun x={3.2} y={3.4} k={0.52} />
    </g>
  ),
  importDown: <F d="M6.9 0H9.5V11L14.8 6V9L8.2 15.6L1.6 9V6L6.9 11Z" f={C.orange} />,

  save: (
    <g>
      <F d="M2 4.5H26V27H5L2 25Z" f="#8d7dbb" /><R x={6} y={5.6} w={16} h={7.5} f="#fff" />
      <R x={7} y={18} w={14} h={9} f="#6d6e71" /><R x={8} y={19} w={4} h={7.4} f="#fff" />
      <Pencil x={11} y={11.2} />
    </g>
  ),
  discard: (
    <g>
      <P d="M11 4V1.4H17V4" w={2} /><R x={1} y={4} w={23.6} h={1.7} f={C.dark} />
      <R x={3.4} y={5.8} w={18.6} h={24} f="#d9dadb" s={C.dark} sw={1.1} /><P d="M7 7V29M11 7V29M15 7V29M18.8 7V29" c={C.mid} w={0.9} />
      <Pencil x={10.4} y={11.2} />
    </g>
  ),
  templates: (
    <g>
      <R x={0.6} y={0.7} w={12} h={10} f="#fbfbfb" s={C.dark} sw={1.1} /><R x={1.2} y={1.4} w={11} h={2} f={C.sky} />
      <Dots pts={[[2, 4.6], [4.6, 4.6], [2, 6.6], [4.6, 6.6], [2, 8.6], [4.6, 8.6]]} s={1.2} f={C.purple} />
      <R x={7} y={3} w={10} h={13} f="#f9f9f9" /><R x={8} y={3.7} w={7.6} h={11.4} f="#fbfbfb" s={C.dark} sw={1.1} />
      <Dots pts={[[9.6, 6], [12.4, 6], [9.6, 8.6], [12.4, 8.6], [9.6, 11.4], [12.4, 11.4]]} s={1.4} f={C.purple} />
    </g>
  ),
  status: <g><circle cx="7.2" cy="7.2" r="6.9" fill={C.sky} /><R x={6} y={2.6} w={2.6} h={2} f="#fff" /><R x={6} y={5.6} w={2.6} h={5.4} f="#fff" /><Pencil x={6.4} y={6.2} k={0.48} /></g>,
  snapping: (
    <g><P d="M1.6 2V23.4H13.5V2M1.6 2H25V12.4H1.6M25 2V12.4" c="#8e9194" w={1.2} /><P d="M24.6 16V30.4M17 23H32" w={1.2} /></g>
  ),
  createFeat: (
    <g>
      <R x={0.3} y={4.2} w={22.4} h={26.4} f="#fbfbfb" s={C.dark} sw={1.1} rx={0.8} /><R x={2.6} y={6} w={17.8} h={22.6} s={C.light} />
      <R x={4.4} y={8.6} w={4} h={3.8} f={C.pale} s={C.blue} sw={1.2} /><R x={4.4} y={15.4} w={4} h={3.8} f={C.mint} s="#67ab66" sw={1.2} /><R x={4.4} y={22} w={4} h={3.8} f="#fdecd6" s={C.orange} sw={1.2} />
      <P d="M10.6 10.5H18.5M10.6 17.2H13M10.6 24H18.5" w={1.1} />
      <Pencil x={12.2} y={1.4} />
    </g>
  ),
  modify: (
    <g>
      <P d="M1.8 16.5L14 28M1 28H28.6" w={1.2} />
      <Node x={1.6} y={16.3} c={C.dark} f="#fff" /><Node x={1.6} y={28} c={C.dark} f="#fff" /><Node x={14} y={28} c={C.dark} f="#fff" /><Node x={26.4} y={28} c={C.dark} f="#fff" />
      <Pencil x={12.4} y={1.4} />
    </g>
  ),
  del: <P d="M7.2 8.2L25 24.6M25 8.2L7.2 24.6" c={C.rust} w={3.6} />,
  attributes: (
    <Win>
      <P d="M5 8H15M17 8H27M5 10.8H15M17 10.8H27M5 13.6H15M17 13.6H27M5 16.4H15M17 16.4H27M5 19.2H15M17 19.2H27" w={1} />
    </Win>
  ),
  move: (
    <g>
      {[0, 90, 180, 270].map((a) => <path key={a} transform={`rotate(${a} 16 15.8)`} d={Arrow4} fill={C.blue} />)}
      <R x={15} y={14.8} w={2} h={2} f={C.dark} />
    </g>
  ),
  vertices: (
    <g>
      <P d="M5 5V27H29V18.5" c="#67ab66" w={1.3} /><P d="M5 5L29 18.5" c="#8cc68d" w={1.2} />
      <P d="M6 5H29V17" c={C.mid} strokeDasharray="1 1.1" />
      <Node x={5} y={5} /><Node x={5} y={27} /><Node x={29} y={27} /><Node x={29} y={5} c={C.mid} f="#ddd" /><Node x={29} y={18.5} c="#dd4f26" f="#f3b9a4" />
    </g>
  ),
  reshape: (
    <g>
      <P d="M5 5V27H18" c="#67ab66" w={1.3} /><P d="M5 5L18 12.5" c="#8cc68d" w={1.3} /><P d="M18 12.5L29 17.5M18 27H29" c={C.mid} strokeDasharray="1 1.1" />
      <P d="M18 7.5V30" w={1} /><Node x={5} y={5} /><Node x={5} y={27} /><Node x={29} y={17.5} c={C.mid} f="#ddd" /><Node x={29} y={27} c={C.mid} f="#ddd" />
    </g>
  ),
  splitLine: (
    <g>
      <P d="M3.6 28.5L29.8 2.6" c="#67ab66" w={1.4} /><P d="M9 8.5L25 23" c={C.mid} strokeDasharray="1.2 2" /><Node x={16.7} y={15.5} c="#dd4f26" f="#f3b9a4" />
    </g>
  ),
  split: (
    <g>
      <P d="M2.6 7.7H29.6" c={C.leaf} w={1.2} /><R x={3} y={11.8} w={26.2} h={12} f={C.mint} s={C.leaf} sw={1.1} />
      <P d="M16 3V29" w={1.1} /><Node x={16} y={2.8} c={C.dark} f="#ccc" /><Node x={16} y={28.8} c={C.dark} f="#ccc" />
    </g>
  ),
  merge: (
    <g>
      <R x={0} y={1.3} w={16} h={13.2} f={C.mint} s={C.leaf} sw={1.1} /><P d="M8 1.3V14.5" c={C.leaf} w={1.1} />
      <R x={15} y={17.3} w={16} h={13.4} f={C.mint} s={C.leaf} sw={1.1} />
      <CurveArrow d="M18.5 4C23 4 24.6 6.5 24.6 10" head="M21 8L24.6 12.8L28.2 8L24.6 9.4Z" />
    </g>
  ),
  enableZ: (
    <g>
      <path d="M3 3.6H11.6V6.2L6.6 11.6H11.8V14H2.6V11.4L7.8 6H3Z" fill="#58595b" />
      <P d="M3.4 29.5L29.4 4" w={1.2} /><R x={13.6} y={14.6} w={4.8} h={4.8} f="#f3c5b2" /><Node x={15.9} y={16.9} c="#d2552b" f="#f3b9a4" />
    </g>
  ),
  filterTpl: (
    <g>
      <g opacity="0.45"><R x={0.6} y={0.8} w={11} h={13} f="#fbfbfb" s={C.mid} rx={0.5} />
        <Dots pts={[[2.5, 2.4], [2.5, 6], [2.5, 9.8]]} s={2.2} f={C.sky} /><P d="M6.5 3.6H9.8M6.5 7H9.8" /></g>
      <P d="M7.5 7.4H12L8 13.2H13" w={1.5} />
    </g>
  ),
  getZ: (
    <g><P d="M8.6 0.8V15M1 8H16" w={1} /><R x={7} y={6.4} w={3} h={3} f="#f5d0bf" s="#d2552b" /><P d="M10.6 9.8H15L11 14.4H15.6" c="#f9f9f9" w={3} /><P d="M10.6 9.8H14.8L11 14.4H15.6" w={1.4} /></g>
  ),
  person: (
    <g><circle cx="5" cy="3" r="2.4" fill={C.mint} stroke={C.leaf} strokeWidth="1.1" /><P d="M0.6 6H9.4V13.4H8V15.2H2V13.4H0.6Z" c={C.leaf} f={C.mint} w={1.1} /><P d="M2.8 8.4V13.4M7.2 8.4V13.4" c="#8cc68d" w={0.9} /></g>
  ),

  pkgProject: <g><Case /><Box x={-0.3} y={17} /></g>,
  pkgMap: <g><FramedMap x={5.2} y={0.4} w={26.4} h={26} /><Box x={-0.3} y={17} /></g>,
  pkgLayer: <g><g transform="translate(2.4 0) scale(0.96 0.96)"><YellowLayer /></g><Box x={-0.3} y={17} /></g>,
  webMap: <FramedMap x={0.8} y={1.6} w={30} h={28.4} />,
  webLayer: <g><g opacity="0.42"><YellowLayer /><Sun x={6.6} y={6.6} /></g></g>,
  jobs: (
    <g>
      <R x={0.8} y={2.5} w={28.8} h={25} f="#fbfbfb" s={C.dark} sw={1.2} /><R x={3} y={4.6} w={24.4} h={21.2} s={C.mid} />
      <P d="M5 8.6H9M5 14.3H9M5 20H9" w={1.1} /><P d="M11 8.6H25M11 10.5H25M11 14.3H25M11 16.2H25M11 20H25M11 21.9H25" c={C.sky} w={1} />
    </g>
  ),
  tplProject: <Case c="#939598" />,
  mapFile: <g><Doc x={6.4} y={2} w={23.6} h={28} fold={6.5} /><R x={-0.8} y={5.4} w={21} h={21} f="#f9f9f9" /><FramedMap x={0.2} y={6.3} w={19.4} h={19} /></g>,
  layerFile: <g><Doc x={5} y={2} w={23.6} h={28} fold={6.5} /><R x={0} y={9} w={19} h={16.5} f="#f9f9f9" /><F d="M2.6 10.6C7 12 11 10 16 10.8L18.2 24C14 25.6 10 22.6 6 24.4L0.4 24.4Z" f={C.sun} /></g>,
  taskFile: (
    <g>
      <Doc x={4.6} y={2} w={23.8} h={28} fold={6.5} /><R x={-0.6} y={9.6} w={20.6} h={17} f="#f9f9f9" />
      <R x={0.6} y={10.6} w={18.6} h={14.6} f="#fbfbfb" s={C.purple} sw={1.1} /><R x={2.4} y={12.2} w={15} h={1.8} f={C.purple} />
      <P d="M3 19L5.6 21.6L9.4 16.8" c="#67ab66" w={1.5} /><P d="M11.6 17.4H17M9 21.2H17" c={C.purple} w={1.1} />
    </g>
  ),
  print: (
    <g>
      <F d="M3.6 11H28.6L32 19H0Z" f="#a7a9ac" /><R x={0} y={20.4} w={32} h={1} f="#fbfbfb" /><F d="M0 21H32V26.4L28.6 28H3.6L0 26.4Z" />
      <R x={6} y={13} w={20} h={3.4} f="#fff" /><Doc x={7.6} y={1} w={16.8} h={13.6} fold={6} />
      <R x={6} y={23} w={20} h={2} f="#fff" /><R x={7.6} y={23.6} w={16.8} h={7} f="#fbfbfb" s={C.dark} sw={1.1} /><P d="M10.5 26.2H21M10.5 28.2H21" c={C.sky} w={1} />
    </g>
  ),
  exportMap: <F d="M3 14.2H23L15.4 7.2H20.4L29.4 16L20.4 24.8H15.4L23 17.8H3Z" f="#67ab66" />,
};

const Icon = ({ n, s = 32, off }) => (
  <Svg $s={s} $off={off} viewBox={`0 0 ${s} ${s}`}>{ICONS[n]}</Svg>
);
const Caret = ({ up, c = '#5e5f61', s = 6, ml = 0 }) => (
  <Svg $s={s} $h={s * 0.56} $ml={ml} viewBox="0 0 10 5.6">
    <path d={up ? 'M5 0L10 5.6H0Z' : 'M0 0H10L5 5.6Z'} fill={c} />
  </Svg>
);

const Big = ({ icon, a, b, w, ml, drop, below, on, off }) => {
  const c = off ? '#a9aaac' : '#5e5f61';
  return (
    <BigBox $w={w} $ml={ml} $on={on} $off={off}>
      <Icon n={icon} off={off} />
      <BigText>
        <TextLine>{a}</TextLine>
        {b && <TextLine>{b}{drop && <Caret c={c} ml={2.6} s={5.6} />}</TextLine>}
        {below && <TextLine><Caret c={c} /></TextLine>}
      </BigText>
    </BigBox>
  );
};
const Row = ({ icon, t, drop, off, on, gap = 4.2, px }) => (
  <RowBox $off={off} $on={on} $px={px}>
    <Icon n={icon} s={16} off={off} />
    <RowText $gap={gap}>{t}</RowText>
    {drop && <Caret s={4.8} ml={4.4} />}
  </RowBox>
);
const Group = ({ w, pad, label, launcher, track, children }) => (
  <GroupBox $w={w}>
    <GroupContent $pad={pad}>{children}</GroupContent>
    <GroupFoot>
      <GroupLabel $track={track}>{label}</GroupLabel>
      {launcher && <LauncherSlot><Icon n="launcher" s={7} /></LauncherSlot>}
    </GroupFoot>
  </GroupBox>
);
const Gallery = ({ w, itemW, items, up }) => (
  <GalleryBox $w={w}>
    {items.map(([icon, a, b], i) => (
      <GalleryItem key={i} $w={itemW}>
        <Icon n={icon} />
        <GalleryText $up={up}>{a}{b && <><br />{b}</>}</GalleryText>
      </GalleryItem>
    ))}
    <Scroller>
      <ScrollCell><Caret up c="#a9aaac" s={5.6} /></ScrollCell>
      <ScrollCell><Caret c="#8a8b8d" s={5.6} /></ScrollCell>
      <ScrollCell $strong>
        <Svg $s={6} viewBox="0 0 6 6"><path d="M0 0H6V1H0ZM0 2.8H6L3 6Z" fill="#5e5f61" /></Svg>
      </ScrollCell>
    </Scroller>
  </GalleryBox>
);

const TABS = [
  ['MAP', 48.5, 5.3], ['INSERT', 61.5, 3.9], ['ANALYSIS', 75.5, 4.9],
  ['VIEW', 50.5, 4.6], ['EDIT', 47, 4.2], ['SHARE', 60, 4.3],
];
const Ribbon = ({ x, w, gap = 0, lead, active, cool, account, children }) => (
  <RibbonBox $x={x} $w={w} $gap={gap}>
    <TabStrip $lead={lead} $cool={cool}>
      <Tab $w={89.9} $brand>PROJECT</Tab>
      {TABS.map(([t, tw, ml]) => <Tab key={t} $w={tw} $ml={ml} $active={t === active} $cool={cool}>{t}</Tab>)}
      {account && <Account><Svg $s={10} $h={16} viewBox="0 0 10 16">{ICONS.person}</Svg>No</Account>}
    </TabStrip>
    <Body $cool={cool}>{children}</Body>
    <Shadow />
  </RibbonBox>
);

const Clipboard = () => (
  <Group w={101.2} pad={3.2} label="Clipboard">
    <Big icon="paste" a="Paste" w={39.4} below off />
    <Rows $ml={2.9}><Row icon="cut" t="Cut" off gap={3.2} /><Row icon="copy" t="Copy" off gap={3.2} /></Rows>
  </Group>
);

export default function App() {
  return (
    <Page>
      <Global />
      <Ribbon x={0} w={945.2} lead={2.9} active="MAP">
        <Clipboard />
        <Group w={163.8} pad={4} label="Navigate" launcher>
          <Big icon="explore" a="Explore" w={44.4} below on />
          <NavGrid>
            <Icon n="globe" s={16} /><Icon n="zoomSel" s={16} off />
            <Icon n="shrink" s={16} /><Icon n="grow" s={16} />
            <Icon n="back" s={16} /><Icon n="fwd" s={16} off />
          </NavGrid>
          <Big icon="book" a="Bookmarks" w={65} ml={4.3} below />
        </Group>
        <Group w={147.2} pad={5} label="Layer">
          <Big icon="basemap" a="Basemap" w={52} below />
          <Big icon="addData" a="Add" b="Data" w={40.4} drop />
          <Big icon="preset" a="Add" b="Preset" w={43.2} drop off />
        </Group>
        <Group w={238.2} pad={5} label="Selection" launcher>
          <Big icon="select" a="Select" w={37.2} below />
          <Big icon="selectAttr" a="Select By" b="Attributes" w={57.6} />
          <Big icon="selectLoc" a="Select By" b="Location" w={56} />
          <Rows $ml={1.7}><Row icon="tableSm" t="Attributes" /><Row icon="clear" t="Clear" off /></Rows>
        </Group>
        <Group w={175.9} pad={5} label="Inquiry">
          <Big icon="info" a="Infographics" w={71.8} below off />
          <Big icon="measure" a="Measure" w={54.4} below />
          <Big icon="locate" a="Locate" w={39.2} />
        </Group>
        <Group w={114} pad={7.2} label="Labeling">
          <Rows><Row icon="tagPause" t="Pause" /><Row icon="tagX" t="View Unplaced" /><Row icon="tag" t="More" drop /></Rows>
        </Group>
      </Ribbon>

      <Ribbon x={69.7} w={823} lead={1.8} active="INSERT">
        <Group w={235.9} pad={4} label="Project">
          <Big icon="newMap" a="New" b="Map" w={36} drop />
          <Rows $ml={4.4} $w={104}>
            <Row icon="newLayout" t="New Layout" drop /><Row icon="importMap" t="Import Map" /><Row icon="connections" t="Connections" drop />
          </Rows>
          <Rows><Row icon="toolboxSm" t="Toolbox" drop /><Row icon="addFolder" t="Add Folder" /><Row icon="task" t="Task" drop /></Rows>
        </Group>
        <Group w={486.3} pad={4} label="Layer Templates" track={-0.3}>
          <Gallery w={473.9} itemW={76.2} items={[
            ['pBright', 'Bright', 'Map Notes'], ['pDark', 'Dark Map', 'Notes'], ['pLight', 'Light Map', 'Notes'],
            ['pPaired', 'Paired', 'Map Notes'], ['pPastel', 'Pastel Map', 'Notes'], ['pRedGreen', 'Red Green', 'Map Notes'],
          ]} />
        </Group>
        <Group w={96.3} pad={6.7} label="Styles">
          <Rows><Row icon="addStyle" t="Add Style" drop /><Row icon="newStyle" t="New Style" /><Row icon="importStyle" t="Import" /></Rows>
        </Group>
      </Ribbon>

      <Ribbon x={141.2} w={1190.1} gap={0.8} lead={1.1} active="ANALYSIS" cool>
        <Group w={292.9} pad={4.3} label="Geoprocessing" launcher>
          <Big icon="history" a="History" w={42} />
          <Big icon="python" a="Python" w={45.6} />
          <Big icon="model" a="ModelBuilder" w={78.6} />
          <Big icon="env" a="Environments" w={78.8} />
          <Big icon="toolbox" a="Tools" w={39} />
        </Group>
        <Group w={773.3} pad={4.3} label="Tools">
          <Gallery w={702.5} itemW={76.25} items={[
            ['spatialJoin', 'Spatial', 'Join'], ['clip', 'Clip'], ['intersect', 'Intersect'], ['union', 'Union'], ['buffer', 'Buffer'],
            ['near', 'Near'], ['report', 'Generate', 'Near Table'], ['report', 'Summarize', 'Nearby'], ['reportZone', 'Summarize', 'Within'],
          ]} />
          <Big icon="network" a="Network" b="Analysis" w={61} ml={2.3} drop />
        </Group>
        <Group w={121.3} pad={3} label="Raster">
          <Big icon="rasterFx" a="Raster" b="Functions" w={60.4} />
          <Big icon="funcFx" a="Function" b="Editor" w={52} />
        </Group>
      </Ribbon>

      <Ribbon x={219.5} w={451.1} lead={0} active="VIEW">
        <Group w={117.3} pad={3} label="View">
          <Rows $w={58.6}>
            <Row icon="global" t="Global" off px={3} /><Row icon="local" t="Local" off px={3} /><Row icon="mapSm" t="Map" on px={3} />
          </Rows>
          <Big icon="convert" a="Convert" w={54} />
        </Group>
        <Group w={53.4} pad={1} label="Link"><Big icon="linkViews" a="Link" b="Views" w={50} drop /></Group>
        <Group w={189.3} pad={3} label="Windows">
          <Big icon="winProject" a="Project" w={47.2} below />
          <Big icon="contents" a="Contents" w={49.6} />
          <Big icon="python" a="Python" w={49} />
          <Big icon="tasks" a="Tasks" w={33.6} />
        </Group>
        <Group w={72.4} pad={7.4} label="Thumbnail">
          <Rows><Row icon="create" t="Create" /><Row icon="importDown" t="Import" /></Rows>
        </Group>
      </Ribbon>

      <Ribbon x={294.8} w={1273.2} lead={1.8} active="EDIT" account>
        <Clipboard />
        <Group w={174.6} pad={2.1} label="Manage Edits" launcher>
          <Big icon="save" a="Save" w={42.6} off />
          <Big icon="discard" a="Discard" w={43} off />
          <Rows $ml={3.5}><Row icon="templates" t="Templates" /><Row icon="status" t="Status" /></Rows>
        </Group>
        <Group w={65.6} pad={4} label="Snapping"><Big icon="snapping" a="Snapping" w={56.5} below on /></Group>
        <Group w={133.3} pad={2} label="Features">
          <Big icon="createFeat" a="Create" w={43.8} />
          <Big icon="modify" a="Modify" w={40.8} />
          <Big icon="del" a="Delete" w={43.8} off />
        </Group>
        <Group w={159.2} pad={5} label="Selection" launcher>
          <Big icon="select" a="Select" w={36.6} below />
          <Big icon="attributes" a="Attributes" w={58.6} />
          <Rows $ml={2.6}><Row icon="clear" t="Clear" off /></Rows>
        </Group>
        <Group w={462.2} pad={4.4} label="Tools">
          <Gallery up w={449.6} itemW={72.25} items={[
            ['move', 'Move'], ['vertices', 'Vertices'], ['reshape', 'Reshape'], ['splitLine', 'Split', 'Line'], ['split', 'Split'], ['merge', 'Merge'],
          ]} />
        </Group>
        <Group w={171.6} pad={3.6} label="Elevation">
          <Big icon="enableZ" a="Enable" w={44} />
          <Rows $ml={1.6}>
            <Row icon="filterTpl" t="Filter Templates" off /><Row icon="getZ" t="Get Z From View" off />
            <ZField><ZInput>0</ZInput><ZUnit>ft<Caret c="#c9cacb" s={5} /></ZUnit></ZField>
          </Rows>
        </Group>
      </Ribbon>

      <Ribbon x={380.6} w={543.3} gap={1.8} lead={1.1} active="SHARE">
        <Group w={128.8} pad={5.2} label="Package">
          <Big icon="pkgProject" a="Project" w={40.6} />
          <Big icon="pkgMap" a="Map" w={41.8} />
          <Big icon="pkgLayer" a="Layer" w={34} off />
        </Group>
        <Group w={89.2} pad={4} label="Share As">
          <Big icon="webMap" a="Web" b="Map" w={37.4} off />
          <Big icon="webLayer" a="Web" b="Layer" w={43.6} drop />
        </Group>
        <Group w={47} pad={4} label="Status"><Big icon="jobs" a="Jobs" w={38.4} /></Group>
        <Group w={179.7} pad={5} label="Save As">
          <Big icon="tplProject" a="Project" b="Template" w={55.4} />
          <Big icon="mapFile" a="Map" b="File" w={37.6} />
          <Big icon="layerFile" a="Layer" b="File" w={39} off />
          <Big icon="taskFile" a="Task" b="File" w={37.4} off />
        </Group>
        <Group w={46.7} pad={4} label="Print"><Big icon="print" a="Map" w={38} /></Group>
        <Group w={47} pad={4} label="Export"><Big icon="exportMap" a="Map" w={38} /></Group>
      </Ribbon>
    </Page>
  );
}
